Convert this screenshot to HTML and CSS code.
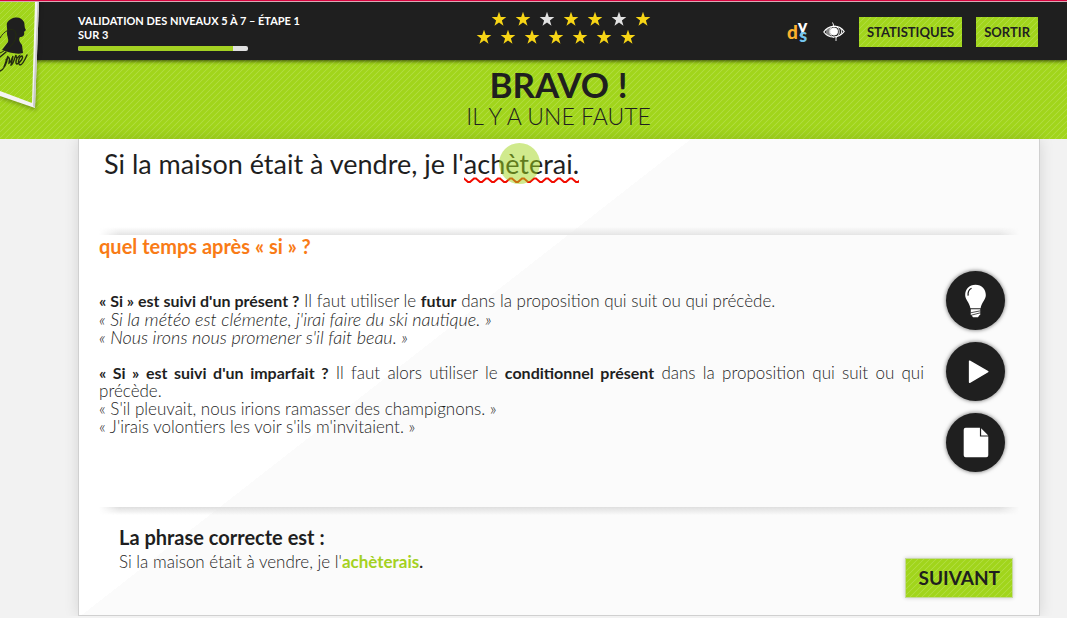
FILE: index.html
```html
<!DOCTYPE html>
<html lang="fr">
<head>
<meta charset="utf-8">
<meta name="viewport" content="width=device-width, initial-scale=1">
<title>Validation des niveaux 5 à 7</title>
<link rel="stylesheet" href="styles.css">
</head>
<body>
<svg class="defs" aria-hidden="true">
  <symbol id="star" viewBox="0 0 16 16"><path d="M8 .7 9.8 6H15.300L10.900 9.400 12.500 14.700 8 11.500 3.500 14.700 5.100 9.400.7 6H6.200Z"/></symbol>
  <pattern id="stripes" width="6" height="6" patternUnits="userSpaceOnUse"><rect width="6" height="6" fill="#a1d51b"/><path d="M-1 1 1-1M0 6 6 0M5 7 7 5" stroke="#b4de47" stroke-width=".8"/></pattern>
  <pattern id="wave" width="12" height="7" patternUnits="userSpaceOnUse"><path d="M-2 3 0 1.500 4 5 6 5 10 1.500 12 1.500 14 3" fill="none" stroke="#f10b00" stroke-width="2"/></pattern>
</svg>

<header class="topbar">
  <svg class="logo" viewBox="0 0 46 114" role="img" aria-label="Projet Voltaire">
    <path class="logo-shadow" d="M0 0H39L36 108 0 96Z"/>
    <path d="M0 0H39L35 106 0 94Z" fill="#f4f4f4"/>
    <path d="M37.500 0H39L35 106 33 104Z" fill="#c9c9c9"/>
    <path d="M0 0H35L32 101 0 89Z" fill="url(#stripes)"/>
    <path d="M7 31C8 24 4 21 11 17C17 14 22 16 24 20C25 23 24 25 26 28L24 30C25 33 23 35 20 35C18 38 20 40 22 43L23 51C17 53 8 50 2 48C4 45 6 43 8 40C9 37 7 35 7 31Z" fill="#1f1f1f"/>
    <g fill="none" stroke="#242c10" stroke-linecap="round"><path d="M0 36C6 26 15 25 16 32C17 40 9 47 0 51" stroke-width="1"/><path d="M0 55 6 50M0 69C5 67 7 60 8 54L4 65M6 58C9 54 10 55 9 61C11 60 12 57 13 54L11 63C13 63 14 57 16 53C16 57 18 56 19 54C16 56 15 62 17 62C20 61 24 55 22 54C19 54 17 62 20 63C22 63 24 60 27 53M12 49 13 50" stroke-width="1.400"/></g>
  </svg>
  <div class="progress-block">
    <h1 class="level">Validation des niveaux 5 à 7 – étape 1 sur 3</h1>
    <div class="progress" role="progressbar" aria-label="Progression" aria-valuemin="0" aria-valuemax="100" aria-valuenow="91"><div class="progress-fill" style="width:91%"></div></div>
  </div>
  <div class="stars" role="img" aria-label="12 étoiles sur 14">
    <div class="star-row star-row-first">
      <svg><use href="#star"/></svg><svg><use href="#star"/></svg><svg class="lost"><use href="#star"/></svg><svg><use href="#star"/></svg><svg><use href="#star"/></svg><svg class="lost"><use href="#star"/></svg><svg><use href="#star"/></svg>
    </div>
    <div class="star-row">
      <svg><use href="#star"/></svg><svg><use href="#star"/></svg><svg><use href="#star"/></svg><svg><use href="#star"/></svg><svg><use href="#star"/></svg><svg><use href="#star"/></svg><svg><use href="#star"/></svg>
    </div>
  </div>
  <nav class="tools">
    <button class="icon-button dys" type="button" aria-label="Mode dys"><span class="dys-d">d</span><span class="dys-y">y</span><span class="dys-s">s</span></button>
    <button class="icon-button" type="button" aria-label="Mode malvoyant">
      <svg class="eye" viewBox="0 0 22 20" fill="none" stroke="#fff"><path d="M.8 10C5 3 16 2 21.200 9.500C16 16.500 6 17 .8 10Z" stroke-width="1.200"/><circle cx="11" cy="9.500" r="3.600" fill="#fff"/><path d="M4 7V13M6 6V14M11 3.500C5.500 5 5.500 14 11 15.500M12 4C17.500 5.500 17.500 13 13 15.500M18 7C19 9 19 11 17 13M9.500 .5 11 4M13 19V14" stroke-width=".9"/></svg>
    </button>
    <button class="btn" type="button">Statistiques</button>
    <button class="btn" type="button">Sortir</button>
  </nav>
</header>

<section class="banner">
  <h2 class="banner-title">Bravo !</h2>
  <p class="banner-text">Il y a une faute</p>
</section>

<main class="card">
  <p class="sentence">Si la maison était à vendre, je l'<span class="fault">achèterai.<svg class="wave"><rect width="100%" height="7" fill="url(#wave)"/></svg><span class="pointer"></span></span></p>

  <section class="rule">
    <div class="rule-text">
      <h3 class="rule-title">quel temps après « si » ?</h3>
      <p><b>« Si » est suivi d'un présent ?</b> Il faut utiliser le <b>futur</b> dans la proposition qui suit ou qui précède. <i>« Si la météo est clémente, j'irai faire du ski nautique. »</i> <i>« Nous irons nous promener s'il fait beau. »</i></p>
      <p><b>« Si » est suivi d'un imparfait ?</b> Il faut alors utiliser le <b>conditionnel présent</b> dans la proposition qui suit ou qui précède.<br>« S'il pleuvait, nous irions ramasser des champignons. »<br>« J'irais volontiers les voir s'ils m'invitaient. »</p>
    </div>
    <div class="actions">
      <button class="round" type="button" aria-label="Astuce"><svg viewBox="0 0 60 60"><path d="M30 14C23.500 14 19.500 18.500 19.500 24.500C19.500 29.500 24 32 24.800 38H35.200C36 32 40.500 29.500 40.500 24.500C40.500 18.500 36.500 14 30 14Z" fill="#fff"/><path d="M22.500 25C22 21 24 18.500 26 17.500" fill="none" stroke="#1f1f1f" stroke-width="1.300"/><path d="M25.200 39H34.800V44L32.500 47H27.500L25.200 44Z" fill="#fff"/><path d="M25 42.500 35 40.500M25.500 45 35 42.500" stroke="#1f1f1f" stroke-width=".8"/></svg></button>
      <button class="round" type="button" aria-label="Lecture"><svg viewBox="0 0 60 60"><path d="M24 19.500V41L42.500 30.200Z" fill="#fff" stroke="#fff" stroke-width="1.500" stroke-linejoin="round"/></svg></button>
      <button class="round" type="button" aria-label="Fiche"><svg viewBox="0 0 60 60"><path d="M19.500 15H34.500V24H43V43A2 2 0 0 1 41 45H20A2 2 0 0 1 18 43V17A2 2 0 0 1 20 15Z" fill="#fff"/><path d="M35.700 15.500V22.800H43Z" fill="#fff"/></svg></button>
    </div>
  </section>

  <section class="answer">
    <div>
      <h3 class="answer-title">La phrase correcte est :</h3>
      <p>Si la maison était à vendre, je l'<b class="fixed">achèterais</b><b>.</b></p>
    </div>
    <button class="btn btn-next" type="button">Suivant</button>
  </section>
</main>
</body>
</html>
```
FILE: styles.css
```css
* { box-sizing: border-box; }
body {
  margin: 0;
  background: #f2f2f2;
  color: #1f1f1f;
  font: 300 17px/18px "Century Gothic", Lato, sans-serif;
  overflow: hidden;
}
h1, h2, h3, p { margin: 0; }
button { border: 0; padding: 0; font: inherit; color: inherit; cursor: pointer; }
b { font-size: 16px; font-weight: 700; }
i { display: block; font-size: 18px; }
.defs { position: absolute; width: 0; height: 0; }

.topbar, .banner { text-transform: uppercase; }
.topbar {
  position: relative;
  z-index: 1;
  display: grid;
  grid-template-columns: 240px 1fr auto;
  height: 60px;
  padding: 0 29px 0 78px;
  background: #1f1f1f;
  border-top: 1px solid #d8043f;
  box-shadow: inset 0 1px #d8aab5, 0 1px 4px rgba(0, 0, 0, .7);
}
.logo { position: absolute; left: 0; top: 1px; width: 46px; height: 114px; }
.logo-shadow { fill: rgba(0, 0, 0, .3); filter: blur(2px); }
.progress-block { padding-top: 13px; }
.level { color: #fff; font-size: 11px; line-height: 14px; font-weight: 700; }
.progress {
  width: 170px;
  height: 5px;
  margin-top: 4px;
  border-radius: 2px;
  overflow: hidden;
  background: #e0e0e0;
}
.progress-fill { height: 100%; background: #a4d122; }

.stars { padding-top: 10px; }
.star-row { display: flex; justify-content: center; gap: 8px; padding-left: 8px; height: 18px; }
.star-row-first { padding-left: 38px; }
.star-row svg { width: 16px; height: 16px; fill: #f7d516; }
.star-row .lost { fill: #e2e2e2; }

.tools { display: flex; align-items: center; gap: 14px; padding-top: 3px; }
.icon-button { background: none; width: 22px; height: 22px; }
.dys { display: flex; font: 900 19px/22px Lato, sans-serif; text-transform: none; }
.dys-d { color: #fbb02d; }
.dys-y { color: #fff; font-size: 18px; line-height: 10px; }
.dys-s { color: #74c5ee; margin-left: -8px; font-size: 18px; line-height: 28px; }
.eye { display: block; width: 22px; height: 20px; }
.btn, .banner {
  background: #a1d51b linear-gradient(135deg, #b0dc3e, #a1d51b 10% 40%, #b0dc3e 50%, #a1d51b 60% 90%, #b0dc3e) 0 0 / 6px 6px;
}
.btn { height: 30px; padding: 0 8px; font-size: 13px; font-weight: 700; text-transform: uppercase; }

.banner { padding: 5px 0 10px 50px; text-align: center; }
.banner-title { font-size: 35px; line-height: 38px; font-weight: 700; }
.banner-text { font-size: 23px; line-height: 26px; font-weight: 300; }

.card {
  margin: 0 27px 0 78px;
  padding: 0 20px 16px;
  min-height: 477px;
  border: 1px solid #d0d0d0;
  border-top: 0;
  background: linear-gradient(142deg, #fff 39%, #fbfbfb 39%);
  box-shadow: 0 0 14px rgba(0, 0, 0, .12);
}
.sentence {
  position: relative;
  height: 96px;
  padding: 8px 5px;
  font-size: 27px;
  line-height: 34px;
  font-weight: 400;
}
.fault { position: relative; display: inline-block; }
.wave { position: absolute; left: 0; bottom: -3px; width: 100%; height: 7px; }
.pointer {
  position: absolute;
  left: 35px;
  top: -4px;
  width: 41px;
  height: 41px;
  border-radius: 50%;
  background: rgba(162, 213, 27, .5);
}
.sentence::after, .answer::before {
  content: "";
  position: absolute;
  left: 0;
  right: 0;
  height: 8px;
  mask-image: linear-gradient(90deg, transparent, #000 20px calc(100% - 20px), transparent);
}
.sentence::after { bottom: 0; background: linear-gradient(transparent, #e4e4e4); }
.answer::before { top: 0; background: linear-gradient(#dedede, transparent); }

.rule { display: flex; gap: 22px; min-height: 272px; }
.rule-text { flex: 1; text-align: justify; }
.rule-text p { margin-bottom: 18px; }
.rule-title { margin-bottom: 34px; color: #f97b16; font-size: 20px; line-height: 23px; font-weight: 700; }
.actions { display: flex; flex-direction: column; gap: 12px; padding: 36px 14px 0 0; }
.round { width: 59px; height: 59px; border-radius: 50%; background: #1f1f1f; box-shadow: 0 0 4px rgba(0, 0, 0, .6); }
.round svg { display: block; width: 59px; height: 59px; }

.answer { position: relative; display: flex; justify-content: space-between; padding: 18px 6px 0 20px; }
.answer-title { margin-bottom: 4px; font-size: 20px; line-height: 24px; font-weight: 700; }
.fixed { color: #a4d122; font-size: 17px; }
.btn-next { height: 40px; margin-top: 33px; padding: 0 12px; font-size: 19px; border: 1px solid #c5d99a; box-shadow: 0 0 4px rgba(0, 0, 0, .2); }
```
